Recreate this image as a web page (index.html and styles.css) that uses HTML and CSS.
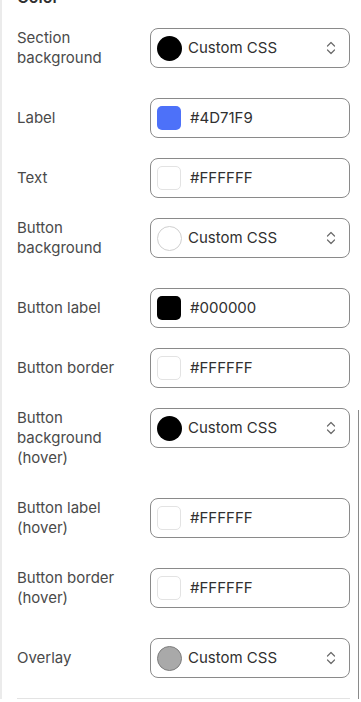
FILE: index.html
```html
<!DOCTYPE html>
<html lang="en">
<head>
<meta charset="utf-8">
<title>Color settings</title>
<link rel="stylesheet" href="styles.css">
</head>
<body>
<div class="panel">
  <h2 class="heading">Color</h2>
  <div class="rows">
    <div class="row multi">
      <div class="label">Section background</div>
      <div class="field select"><span class="dot black"></span><span class="value">Custom CSS</span><svg class="chev" viewBox="0 0 12 16" width="12" height="16"><path d="M2.5 6 6 2.5 9.5 6M2.5 10 6 13.5 9.5 10" fill="none" stroke="#6b6b6b" stroke-width="1.2" stroke-linecap="round" stroke-linejoin="round"/></svg></div>
    </div>
    <div class="row">
      <div class="label">Label</div>
      <div class="field"><span class="sq blue"></span><span class="value hex">#4D71F9</span></div>
    </div>
    <div class="row">
      <div class="label">Text</div>
      <div class="field"><span class="sq white"></span><span class="value hex">#FFFFFF</span></div>
    </div>
    <div class="row multi">
      <div class="label">Button background</div>
      <div class="field select"><span class="dot white"></span><span class="value">Custom CSS</span><svg class="chev" viewBox="0 0 12 16" width="12" height="16"><path d="M2.5 6 6 2.5 9.5 6M2.5 10 6 13.5 9.5 10" fill="none" stroke="#6b6b6b" stroke-width="1.2" stroke-linecap="round" stroke-linejoin="round"/></svg></div>
    </div>
    <div class="row">
      <div class="label">Button label</div>
      <div class="field"><span class="sq black"></span><span class="value hex">#000000</span></div>
    </div>
    <div class="row">
      <div class="label">Button border</div>
      <div class="field"><span class="sq white"></span><span class="value hex">#FFFFFF</span></div>
    </div>
    <div class="row multi">
      <div class="label">Button background (hover)</div>
      <div class="field select"><span class="dot black"></span><span class="value">Custom CSS</span><svg class="chev" viewBox="0 0 12 16" width="12" height="16"><path d="M2.5 6 6 2.5 9.5 6M2.5 10 6 13.5 9.5 10" fill="none" stroke="#6b6b6b" stroke-width="1.2" stroke-linecap="round" stroke-linejoin="round"/></svg></div>
    </div>
    <div class="row multi">
      <div class="label">Button label (hover)</div>
      <div class="field"><span class="sq white"></span><span class="value hex">#FFFFFF</span></div>
    </div>
    <div class="row multi">
      <div class="label">Button border (hover)</div>
      <div class="field"><span class="sq white"></span><span class="value hex">#FFFFFF</span></div>
    </div>
    <div class="row">
      <div class="label">Overlay</div>
      <div class="field select"><span class="dot gray"></span><span class="value">Custom CSS</span><svg class="chev" viewBox="0 0 12 16" width="12" height="16"><path d="M2.5 6 6 2.5 9.5 6M2.5 10 6 13.5 9.5 10" fill="none" stroke="#6b6b6b" stroke-width="1.2" stroke-linecap="round" stroke-linejoin="round"/></svg></div>
    </div>
  </div>
  <hr class="divider">
  <div class="scrollline"></div>
</div>
</body>
</html>
```

FILE: styles.css
```css
* { box-sizing: border-box; }
html, body { margin: 0; padding: 0; background: #fff; }
body {
  font-family: Inter, "Noto Sans", sans-serif;
  font-size: 15px;
  line-height: 20px;
  color: #303030;
  overflow: hidden;
}
.panel {
  position: relative;
  border-left: 2px solid #ebebeb;
  padding: 0 11px 0 15px;
  min-height: 702px;
}
.heading {
  margin: -13px 0 0;
  height: 20px;
  font-size: 16px;
  line-height: 20px;
  font-weight: 600;
  color: #303030;
}
.rows {
  margin-top: 21px;
  display: flex;
  flex-direction: column;
  gap: 20px;
}
.row {
  display: flex;
  align-items: flex-start;
  gap: 16px;
}
.row.multi { padding-bottom: 10px; }
.label {
  width: 117px;
  flex: none;
  min-height: 40px;
  display: flex;
  align-items: center;
  color: #4a4a4a;
}
.field {
  width: 200px;
  height: 40px;
  flex: none;
  border: 1px solid #8a8a8a;
  border-radius: 8px;
  display: flex;
  align-items: center;
  padding: 0 6px;
}
.value { color: #303030; }
.value.hex { margin-left: 9px; }
.select .value { margin-left: 6px; flex: 1; }
.chev { margin-right: 6px; }
.dot {
  width: 25px;
  height: 25px;
  border-radius: 50%;
  flex: none;
}
.dot.black { background: #000; }
.dot.white { background: #fff; border: 1px solid #cfcfcf; }
.dot.gray { background: #a9a9a9; border: 1px solid #7d7d7d; }
.sq {
  width: 24px;
  height: 24px;
  border-radius: 5px;
  flex: none;
}
.sq.blue { background: #4d71f9; }
.sq.black { background: #000; }
.sq.white { background: #fff; border: 1px solid #e3e3e3; }
.divider {
  margin: 20px 0 0;
  width: 333px;
  border: 0;
  border-top: 1px solid #e3e3e3;
  height: 0;
}
.scrollline {
  position: absolute;
  right: 2px;
  top: 423px;
  bottom: 0;
  width: 1px;
  background: #8a8a8a;
}
```
